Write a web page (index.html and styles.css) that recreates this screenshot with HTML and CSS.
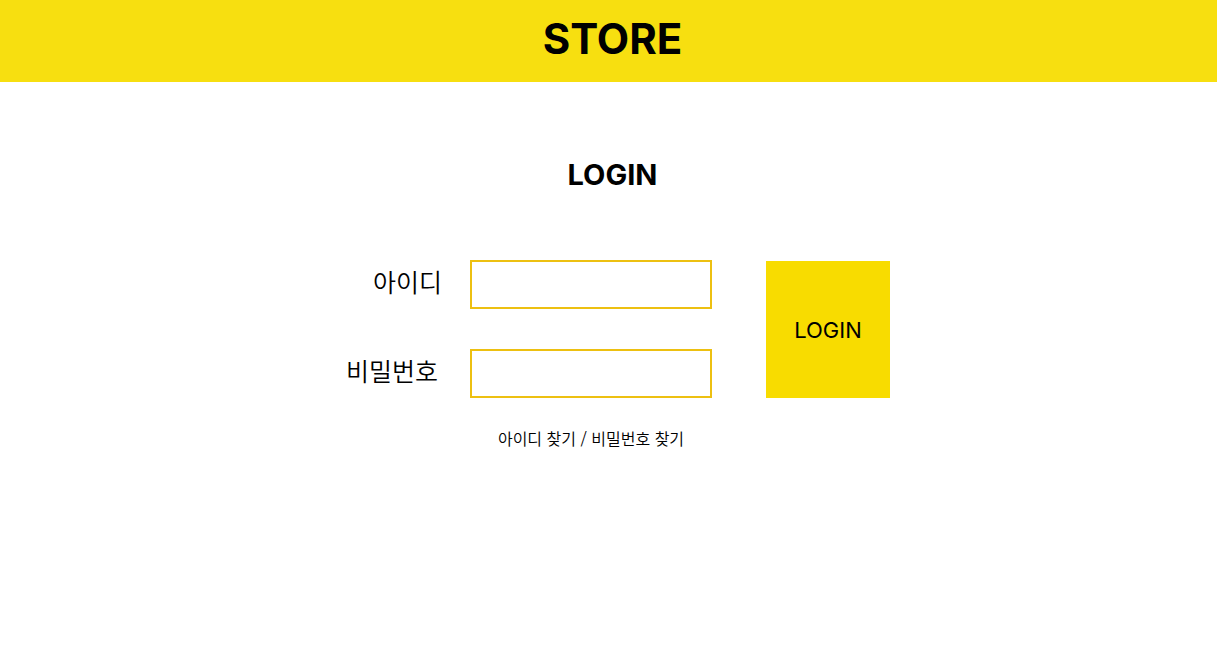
FILE: index.html
```
<!DOCTYPE html>
<html lang="ko">
<head>
<meta charset="utf-8">
<meta name="viewport" content="width=device-width, initial-scale=1">
<title>STORE</title>
<link rel="stylesheet" href="styles.css">
</head>
<body>
<header class="banner"><h1 class="brand">STORE</h1></header>
<main class="page">
<h2 class="title">LOGIN</h2>
<form class="login">
<label class="label" for="user">아이디</label>
<input class="field" id="user" type="text">
<label class="label label-wide" for="pass">비밀번호</label>
<input class="field" id="pass" type="password">
<button class="submit" type="submit">LOGIN</button>
<p class="help"><a href="#id">아이디 찾기</a> / <a href="#pw">비밀번호 찾기</a></p>
</form>
</main>
</body>
</html>
```
FILE: styles.css
```
* { box-sizing: border-box; }
body {
  margin: 0;
  background: #fff;
  color: #000;
  font-family: Inter, "Noto Sans CJK KR", sans-serif;
}
.banner {
  padding: 7px 0 11px 8px;
  background: #f7df10;
  text-align: center;
}
.brand { margin: 0; font-size: 42px; line-height: 64px; font-weight: 700; }
.page { padding: 75px 16px 16px; }
.title {
  margin: 0 0 67px;
  padding-left: 8px;
  font-size: 29px;
  line-height: 36px;
  font-weight: 700;
  text-align: center;
}
.login {
  display: grid;
  grid-template-columns: 96px 242px 150px;
  grid-template-rows: 49px 49px auto;
  column-gap: 28px;
  row-gap: 40px;
  justify-content: center;
  padding-left: 19px;
}
.label {
  justify-self: end;
  align-self: center;
  padding-bottom: 8px;
  font-family: "Noto Sans CJK KR", sans-serif;
  font-size: 25px;
  line-height: 36px;
  font-weight: 350;
}
.label-wide { padding-right: 4px; }
.field {
  width: 100%;
  padding: 0 12px;
  border: 2px solid #edc011;
  border-radius: 0;
  background: #fff;
  font: 20px Inter, sans-serif;
}
.submit {
  grid-column: 3;
  grid-row: 1 / 3;
  margin: 1px 0 0 26px;
  padding: 0;
  border: 0;
  background: #f8dc00;
  color: #000;
  font: 22px Inter, sans-serif;
}
.help {
  grid-column: 2;
  margin: -12px 0 0;
  font-family: "Noto Sans CJK KR", sans-serif;
  font-size: 16px;
  line-height: 24px;
  font-weight: 350;
  text-align: center;
}
.help a { color: inherit; text-decoration: none; }
```
